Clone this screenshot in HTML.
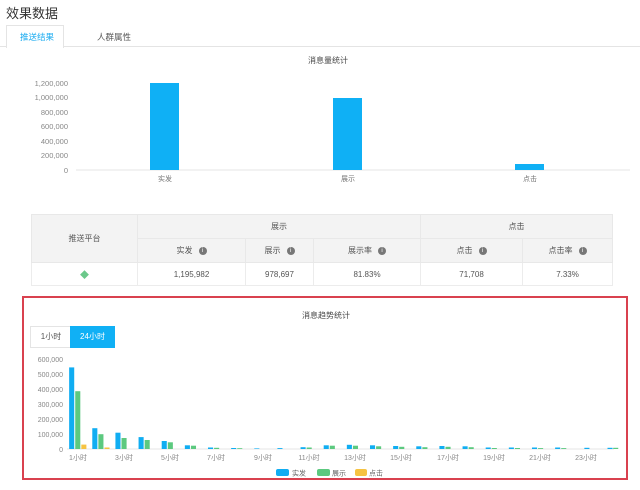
<!DOCTYPE html>
<html><head><meta charset="utf-8"><style>
body{margin:0;width:640px;height:490px;background:#fff;position:relative;overflow:hidden;font-family:"Liberation Sans","Noto Sans CJK SC",sans-serif;color:#555}
.a{position:absolute;white-space:nowrap}
table{position:absolute;left:31px;top:214px;width:581px;border-collapse:collapse;table-layout:fixed;font-size:8px;color:#555}
td{border:1px solid #ececec;text-align:center;padding:0}
th{font-weight:normal;background:#f3f3f3;border:1px solid #e8e8e8;text-align:center;padding:0}
.i{display:inline-block;width:8px;height:8px;border-radius:50%;background:#777;color:#fff;font-size:6px;line-height:8px;margin-left:6px;vertical-align:middle}
</style></head><body>
<div class="a" style="left:6px;top:3px;font-size:13px;color:#333">效果数据</div>
<div class="a" style="left:6px;top:25px;width:56px;height:22px;border:1px solid #e4e4e4;border-bottom:none;background:#fff;z-index:2"></div>
<div class="a" style="left:0;top:46px;width:640px;height:1px;background:#e4e4e4"></div>
<div class="a" style="left:20px;top:31px;font-size:8.5px;color:#1aabf0;z-index:3">推送结果</div>
<div class="a" style="left:97px;top:31px;font-size:8.5px;color:#555">人群属性</div>
<div class="a" style="left:308px;top:55px;font-size:8px;color:#444">消息量统计</div>
<svg class="a" style="left:0;top:0" width="640" height="200">
<g font-size="7.5" fill="#888" text-anchor="end" font-family="Liberation Sans">
<text x="68" y="86">1,200,000</text><text x="68" y="100">1,000,000</text><text x="68" y="115">800,000</text><text x="68" y="129">600,000</text><text x="68" y="144">400,000</text><text x="68" y="158">200,000</text><text x="68" y="173">0</text></g>
<line x1="76" y1="170" x2="630" y2="170" stroke="#e6e6e6"/>
<rect x="150" y="83" width="29" height="87" fill="#0fb0f5"/>
<rect x="333" y="98" width="29" height="72" fill="#0fb0f5"/>
<rect x="515" y="164" width="29" height="6" fill="#0fb0f5"/>
<g font-size="7" fill="#777" text-anchor="middle" font-family="Liberation Sans,Noto Sans CJK SC"><text x="165" y="181">实发</text><text x="348" y="181">展示</text><text x="530" y="181">点击</text></g>
</svg>
<table>
<colgroup><col style="width:106px"><col style="width:108px"><col style="width:68px"><col style="width:107px"><col style="width:102px"><col style="width:90px"></colgroup>
<tr style="height:24px"><th rowspan="2">推送平台</th><th colspan="3">展示</th><th colspan="2">点击</th></tr>
<tr style="height:24px"><th>实发<span class="i">i</span></th><th>展示<span class="i">i</span></th><th>展示率<span class="i">i</span></th><th>点击<span class="i">i</span></th><th>点击率<span class="i">i</span></th></tr>
<tr style="height:23px"><td><span style="color:#6bc88a;font-size:9px">◆</span></td><td>1,195,982</td><td>978,697</td><td>81.83%</td><td>71,708</td><td>7.33%</td></tr>
</table>
<div class="a" style="left:22px;top:296px;width:602px;height:180px;border:2px solid #d9414f"></div>
<div class="a" style="left:302px;top:310px;font-size:8px;color:#444">消息趋势统计</div>
<div class="a" style="left:30px;top:326px;width:40px;height:20px;border:1px solid #e4e4e4;font-size:8px;line-height:20px;text-align:center;color:#555">1小时</div>
<div class="a" style="left:70px;top:326px;width:45px;height:22px;background:#10b0f5;font-size:8px;line-height:22px;text-align:center;color:#fff">24小时</div>
<svg class="a" style="left:0;top:0" width="640" height="490">
<g font-size="7" fill="#888" text-anchor="end" font-family="Liberation Sans">
<text x="63" y="362">600,000</text><text x="63" y="377">500,000</text><text x="63" y="392">400,000</text><text x="63" y="407">300,000</text><text x="63" y="422">200,000</text><text x="63" y="437">100,000</text><text x="63" y="452">0</text></g>
<line x1="67" y1="449" x2="614" y2="449" stroke="#e6e6e6"/>
<g transform="translate(12.3,0) scale(1.015,1)">
<g fill="#10adf2">
<rect x="56" y="367.4" width="5" height="81.6"/><rect x="78.8" y="428.2" width="5" height="20.8"/><rect x="101.6" y="432.7" width="5" height="16.3"/><rect x="124.4" y="437.1" width="5" height="11.9"/><rect x="147.2" y="441" width="5" height="8"/><rect x="170" y="445.3" width="5" height="3.7"/><rect x="192.8" y="447.5" width="5" height="1.5"/><rect x="215.6" y="448" width="5" height="1"/><rect x="238.4" y="448.4" width="5" height="0.6"/><rect x="261.2" y="448.1" width="5" height="0.9"/><rect x="284" y="447.2" width="5" height="1.8"/><rect x="306.8" y="445.3" width="5" height="3.7"/><rect x="329.6" y="444.8" width="5" height="4.2"/><rect x="352.4" y="445.3" width="5" height="3.7"/><rect x="375.2" y="446" width="5" height="3"/><rect x="398" y="446.3" width="5" height="2.7"/><rect x="420.8" y="446" width="5" height="3"/><rect x="443.6" y="446.3" width="5" height="2.7"/><rect x="466.4" y="447.5" width="5" height="1.5"/><rect x="489.2" y="447.5" width="5" height="1.5"/><rect x="512" y="447.5" width="5" height="1.5"/><rect x="534.8" y="447.5" width="5" height="1.5"/><rect x="563.6" y="447.8" width="5" height="1.2"/><rect x="586.4" y="447.8" width="5" height="1.2"/></g>
<g fill="#5cc97f">
<rect x="62" y="391.2" width="5" height="57.8"/><rect x="84.8" y="434.2" width="5" height="14.8"/><rect x="107.6" y="438" width="5" height="11"/><rect x="130.4" y="440" width="5" height="9"/><rect x="153.2" y="442.3" width="5" height="6.7"/><rect x="176" y="445.7" width="5" height="3.3"/><rect x="198.8" y="447.8" width="5" height="1.2"/><rect x="221.6" y="448.2" width="5" height="0.8"/><rect x="290" y="447.5" width="5" height="1.5"/><rect x="312.8" y="445.7" width="5" height="3.3"/><rect x="335.6" y="445.7" width="5" height="3.3"/><rect x="358.4" y="446.3" width="5" height="2.7"/><rect x="381.2" y="446.8" width="5" height="2.2"/><rect x="404" y="447.2" width="5" height="1.8"/><rect x="426.8" y="446.8" width="5" height="2.2"/><rect x="449.6" y="447.2" width="5" height="1.8"/><rect x="472.4" y="448" width="5" height="1"/><rect x="495.2" y="448" width="5" height="1"/><rect x="518" y="448.1" width="5" height="0.9"/><rect x="540.8" y="448.1" width="5" height="0.9"/><rect x="592" y="447.8" width="5" height="1.2"/></g>
<g fill="#f6c342"><rect x="68" y="444.6" width="5" height="4.4"/><rect x="90.8" y="447.5" width="5" height="1.5"/></g>
</g>
<g font-size="7" fill="#888" text-anchor="middle" font-family="Liberation Sans,Noto Sans CJK SC">
<text x="78" y="460">1小时</text><text x="124" y="460">3小时</text><text x="170" y="460">5小时</text><text x="216" y="460">7小时</text><text x="263" y="460">9小时</text><text x="309" y="460">11小时</text><text x="355" y="460">13小时</text><text x="401" y="460">15小时</text><text x="448" y="460">17小时</text><text x="494" y="460">19小时</text><text x="540" y="460">21小时</text><text x="586" y="460">23小时</text></g>
<rect x="276" y="469" width="13" height="7" rx="2" fill="#10adf2"/><rect x="317" y="469" width="13" height="7" rx="2" fill="#5cc97f"/><rect x="355" y="469" width="12" height="7" rx="2" fill="#f6c342"/>
<g font-size="7" fill="#666" font-family="Liberation Sans,Noto Sans CJK SC"><text x="292" y="475.5">实发</text><text x="332" y="475.5">展示</text><text x="369" y="475.5">点击</text></g>
</svg>
</body></html>
